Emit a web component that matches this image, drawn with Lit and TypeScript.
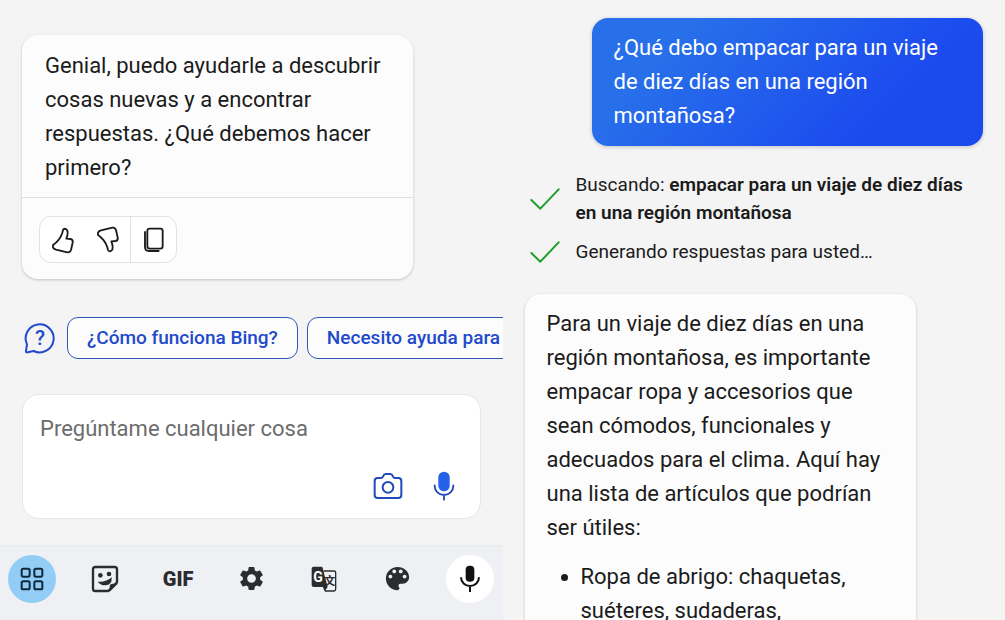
import { LitElement, html, css, svg } from "lit";
import { customElement, state } from "lit/decorators.js";

const thumbPath =
  "M9 57C22 48 32 36 37 20L39 12C41 7 47 7 51 12C55 19 53 28 49 38L62 39Q70 41 68 50L63 72Q60 80 52 79L18 71Q11 69 9 64Z";

const icons = {
  like: html`<svg width="26" height="28" viewBox="0 0 78 84" fill="none" stroke="currentColor" stroke-width="5.5" stroke-linejoin="round" aria-hidden="true"><path d=${thumbPath} /></svg>`,
  dislike: html`<svg width="26" height="28" viewBox="0 0 78 84" fill="none" stroke="currentColor" stroke-width="5.5" stroke-linejoin="round" aria-hidden="true"><path transform="translate(0 84) scale(1 -1)" d=${thumbPath} /></svg>`,
  copy: html`<svg width="26" height="28" viewBox="0 0 78 84" fill="none" stroke="currentColor" stroke-width="5.5" stroke-linecap="round" aria-hidden="true"><rect x="19" y="8" width="46" height="60" rx="7" /><path d="M12 18V63Q12 75 24 75H53" /></svg>`,
  help: html`<svg width="32" height="32" viewBox="0 0 96 96" fill="none" stroke="currentColor" stroke-width="6" stroke-linejoin="round" stroke-linecap="round" aria-hidden="true">
    <path d="M9 67A42 42 0 1 1 29 87L11 91Q5 92 6 86Z" />
    <text class="glyph-mark" x="48" y="70" text-anchor="middle" fill="currentColor" stroke="none">?</text>
  </svg>`,
  camera: html`<svg width="30" height="28" viewBox="0 0 90 84" fill="none" stroke="currentColor" stroke-width="6" stroke-linejoin="round" aria-hidden="true"><path d="M14 18H24Q28 18 30 14L31 12Q33 6 38 6H52Q57 6 59 12L60 14Q62 18 66 18H76Q85 18 85 27V69Q85 78 76 78H14Q5 78 5 69V27Q5 18 14 18Z" /><circle cx="45" cy="46" r="16" /></svg>`,
  micBlue: html`<svg width="22" height="30" viewBox="0 0 66 90" fill="none" stroke="currentColor" stroke-width="5.5" stroke-linecap="round" aria-hidden="true"><rect x="16" y="2" width="34" height="59" rx="17" fill="#2460e8" stroke="none" /><path d="M5 43V45A28 27 0 0 0 61 45V43M33 72V86" /></svg>`,
  check: html`<svg class="check" width="30" height="22" viewBox="0 0 90 66" fill="none" stroke="currentColor" stroke-width="6" stroke-linecap="round" stroke-linejoin="round" aria-hidden="true"><path d="M4 36L31 62L86 4" /></svg>`,
  grid: html`<svg width="24" height="24" viewBox="0 0 72 72" fill="none" stroke="currentColor" stroke-width="6" aria-hidden="true">${[5, 43].map((x) => [5, 43].map((y) => svg`<rect x=${x} y=${y} width="24" height="24" rx="5" />`))}</svg>`,
  sticker: html`<svg width="28" height="28" viewBox="0 0 84 84" aria-hidden="true"><path d="M13 6H71Q78 6 78 13V52L52 78H13Q6 78 6 71V13Q6 6 13 6Z" fill="none" stroke="currentColor" stroke-width="7" stroke-linejoin="round" /><path d="M56 80V65Q56 56 65 56H80Z" fill="currentColor" /><circle cx="28" cy="31" r="7" fill="currentColor" /><circle cx="54" cy="27" r="7" fill="currentColor" /><path d="M20 50Q44 53 62 37Q64 61 43 61Q28 61 20 50Z" fill="currentColor" /></svg>`,
  gear: html`<svg width="29" height="29" viewBox="0 0 24 24" fill="currentColor" aria-hidden="true"><path d="M19.14 12.94c.04-.3.06-.61.06-.94 0-.32-.02-.64-.07-.94l2.03-1.58c.18-.14.23-.41.12-.61l-1.92-3.32c-.12-.22-.37-.29-.59-.22l-2.39.96c-.5-.38-1.03-.7-1.62-.94l-.36-2.54c-.04-.24-.24-.41-.48-.41h-3.84c-.24 0-.43.17-.47.41l-.36 2.54c-.59.24-1.13.57-1.62.94l-2.39-.96c-.22-.08-.47 0-.59.22L2.74 8.87c-.12.21-.08.47.12.61l2.03 1.58c-.05.3-.09.63-.09.94s.02.64.07.94l-2.03 1.58c-.18.14-.23.41-.12.61l1.92 3.32c.12.22.37.29.59.22l2.39-.96c.5.38 1.03.7 1.62.94l.36 2.54c.05.24.24.41.48.41h3.84c.24 0 .44-.17.47-.41l.36-2.54c.59-.24 1.13-.56 1.62-.94l2.39.96c.22.08.47 0 .59-.22l1.92-3.32c.12-.22.07-.47-.12-.61l-2.01-1.58zM12 15.6c-1.98 0-3.6-1.62-3.6-3.6s1.62-3.6 3.6-3.6 3.6 1.62 3.6 3.6-1.62 3.6-3.6 3.6z" /></svg>`,
  translate: html`<svg width="26" height="26" viewBox="0 0 78 78" aria-hidden="true">
    <path d="M38 15H69Q74 15 74 20V70Q74 75 69 75H43L35 56" fill="none" stroke="currentColor" stroke-width="4" />
    <path d="M8 2H31Q34 2 35 5L50 63L42 74L37 63H8Q2 63 2 57V8Q2 2 8 2Z" fill="currentColor" />
    <path d="M40 24H72V60H52Z" fill="#eef0f3" />
    <text class="glyph-han" x="56" y="57" text-anchor="middle" fill="currentColor">文</text>
    <text class="glyph-latin" x="21" y="48" text-anchor="middle" fill="#fff">G</text>
  </svg>`,
  palette: html`<svg width="31" height="31" viewBox="0 0 24 24" fill="currentColor" aria-hidden="true"><path d="M12 3c-4.97 0-9 4.03-9 9s4.03 9 9 9c.83 0 1.5-.67 1.5-1.5 0-.39-.15-.74-.39-1.01-.23-.26-.38-.61-.38-.99 0-.83.67-1.5 1.5-1.5H16c2.76 0 5-2.24 5-5 0-4.42-4.03-8-9-8zm-5.5 9c-.83 0-1.5-.67-1.5-1.5S5.67 9 6.5 9 8 9.67 8 10.5 7.33 12 6.5 12zm3-4C8.67 8 8 7.33 8 6.5S8.67 5 9.5 5s1.5.67 1.5 1.5S10.33 8 9.5 8zm5 0c-.83 0-1.5-.67-1.5-1.5S13.67 5 14.5 5s1.5.67 1.5 1.5S15.33 8 14.5 8zm3 4c-.83 0-1.5-.67-1.5-1.5S16.67 9 17.5 9s1.5.67 1.5 1.5-.67 1.5-1.5 1.5z" /></svg>`,
  mic: html`<svg width="22" height="28" viewBox="0 0 66 84" fill="none" stroke="currentColor" stroke-width="6" aria-hidden="true"><rect x="20" y="2" width="26" height="48" rx="12" fill="currentColor" stroke="none" /><path d="M6 37A27 26 0 0 0 60 37M33 63V81" /></svg>`,
};

@customElement("app-root")
export class AppRoot extends LitElement {
  @state() private draft = "";

  private suggestions = ["¿Cómo funciona Bing?", "Necesito ayuda para"];

  private tools = [
    { label: "Menú", content: icons.grid, kind: "tool round active" },
    { label: "Stickers", content: icons.sticker, kind: "tool" },
    { label: "GIF", content: html`GIF`, kind: "tool gif" },
    { label: "Configuración", content: icons.gear, kind: "tool" },
    { label: "Traducir", content: icons.translate, kind: "tool" },
    { label: "Temas", content: icons.palette, kind: "tool" },
    { label: "Entrada por voz", content: icons.mic, kind: "tool round voice" },
  ];

  static styles = css`
    :host {
      display: grid;
      grid-template-columns: minmax(0, 1fr) minmax(0, 1fr);
      height: 100vh;
      overflow: hidden;
      background: #f4f4f4;
      color: #1b1b1b;
      font-family: Roboto, "Liberation Sans", sans-serif;
      font-size: 22px;
      line-height: 34px;
    }
    * {
      box-sizing: border-box;
    }
    button,
    textarea {
      font: inherit;
      color: inherit;
      margin: 0;
      padding: 0;
      border: 0;
      background: none;
    }
    svg {
      display: block;
      flex: none;
    }
    p,
    ul {
      margin: 0;
    }
    .pane {
      display: flex;
      flex-direction: column;
      min-width: 0;
      overflow: hidden;
    }
    .start {
      padding-top: 35px;
    }
    .thread {
      padding: 18px 22px 0;
    }
    .card {
      flex: none;
      background: #fcfcfc;
      border-radius: 16px;
      box-shadow: 0 1px 3px rgba(0, 0, 0, 0.2);
    }
    .start .card {
      margin: 0 90px 0 22px;
    }
    .message {
      padding: 14px 22px 12px 23px;
    }
    .feedback {
      display: flex;
      padding: 18px 17px 16px;
      border-top: 1px solid #e0e0e0;
    }
    .group {
      display: flex;
      border: 1px solid #e2e2e2;
      border-radius: 12px;
      background: #fff;
    }
    .group button {
      display: grid;
      place-items: center;
      width: 45px;
      height: 45px;
    }
    .group button:last-child {
      width: 46px;
      border-left: 1px solid #e2e2e2;
    }
    .suggestions {
      display: flex;
      align-items: center;
      flex: none;
      gap: 9px;
      margin: 38px 0 35px;
      padding-left: 24px;
      overflow: hidden;
      color: #2149cb;
    }
    .suggestions svg {
      margin-right: 2px;
    }
    .chip {
      flex: none;
      height: 42px;
      padding: 0 19px;
      border: 1px solid #2f56b8;
      border-radius: 11px;
      background: #fcfcfc;
      font-size: 19px;
      font-weight: 500;
      line-height: 28px;
      white-space: nowrap;
    }
    .composer {
      display: flex;
      flex-direction: column;
      flex: none;
      margin: 0 22px;
      padding: 17px;
      border: 1px solid #e6e6e6;
      border-radius: 17px;
      background: #fff;
    }
    .composer textarea {
      height: 34px;
      resize: none;
      outline: none;
      overflow: hidden;
    }
    .composer textarea::placeholder {
      color: #6c6c6c;
      opacity: 1;
    }
    .composer-actions {
      display: flex;
      justify-content: flex-end;
      align-items: center;
      gap: 30px;
      padding: 25px 8px 0 0;
      color: #2149b8;
    }
    .keyboard {
      display: flex;
      align-items: center;
      justify-content: space-between;
      flex: none;
      margin-top: auto;
      height: 75px;
      padding: 0 8px 10px;
      border-top: 2px solid #e9ebed;
      background: #eef0f3;
      color: #2b2c2f;
    }
    .tool {
      display: grid;
      place-items: center;
      width: 48px;
      height: 48px;
    }
    .round {
      border-radius: 50%;
    }
    .active {
      background: #92cdf6;
      color: #10273d;
    }
    .voice {
      background: #fff;
      color: #111;
    }
    .gif {
      font-size: 20px;
      font-weight: 900;
      line-height: 24px;
    }
    .glyph-mark {
      font-size: 62px;
      font-weight: 500;
    }
    .glyph-latin {
      font-size: 42px;
      font-weight: 700;
    }
    .glyph-han {
      font-family: "Noto Sans CJK SC", sans-serif;
      font-size: 34px;
      font-weight: 700;
    }
    .question {
      flex: none;
      margin-left: 67px;
      padding: 13px 22px;
      border-radius: 16px;
      background: linear-gradient(135deg, #2870ea 20%, #1b4aef 75%);
      box-shadow: 0 1px 4px rgba(0, 0, 0, 0.2);
      color: #fff;
    }
    .steps {
      display: grid;
      flex: none;
      gap: 11px;
      margin: 25px 0 28px;
      padding: 0 0 0 5px;
      list-style: none;
      font-size: 19px;
      line-height: 28px;
    }
    .step {
      display: flex;
      align-items: center;
      gap: 16px;
    }
    .step b {
      font-weight: 600;
    }
    .check {
      color: #1f9d2b;
    }
    .answer {
      margin-right: 67px;
      padding: 13px 22px 40px;
    }
    .items {
      margin-top: 15px;
      padding-left: 34px;
    }
  `;

  private onInput(event: Event) {
    this.draft = (event.target as HTMLTextAreaElement).value;
  }

  render() {
    return html`
      <section class="pane start">
        <article class="card">
          <p class="message">Genial, puedo ayudarle a descubrir cosas nuevas y a encontrar respuestas. ¿Qué debemos hacer primero?</p>
          <div class="feedback">
            <div class="group">
              <button aria-label="Me gusta">${icons.like}</button>
              <button aria-label="No me gusta">${icons.dislike}</button>
              <button aria-label="Copiar">${icons.copy}</button>
            </div>
          </div>
        </article>
        <div class="suggestions">
          ${icons.help}
          ${this.suggestions.map((text) => html`<button class="chip">${text}</button>`)}
        </div>
        <form class="composer">
          <textarea aria-label="Mensaje" rows="1" placeholder="Pregúntame cualquier cosa" .value=${this.draft} @input=${this.onInput}></textarea>
          <div class="composer-actions">
            <button type="button" aria-label="Cámara">${icons.camera}</button>
            <button type="button" aria-label="Micrófono">${icons.micBlue}</button>
          </div>
        </form>
        <nav class="keyboard">
          ${this.tools.map((tool) => html`<button class=${tool.kind} aria-label=${tool.label}>${tool.content}</button>`)}
        </nav>
      </section>
      <section class="pane thread">
        <p class="question">¿Qué debo empacar para un viaje de diez días en una región montañosa?</p>
        <ul class="steps">
          <li class="step">${icons.check}<span>Buscando: <b>empacar para un viaje de diez días en una región montañosa</b></span></li>
          <li class="step">${icons.check}<span>Generando respuestas para usted…</span></li>
        </ul>
        <article class="card answer">
          <p>Para un viaje de diez días en una región montañosa, es importante empacar ropa y accesorios que sean cómodos, funcionales y adecuados para el clima. Aquí hay una lista de artículos que podrían ser útiles:</p>
          <ul class="items">
            <li>Ropa de abrigo: chaquetas, suéteres, sudaderas,</li>
          </ul>
        </article>
      </section>
    `;
  }
}
